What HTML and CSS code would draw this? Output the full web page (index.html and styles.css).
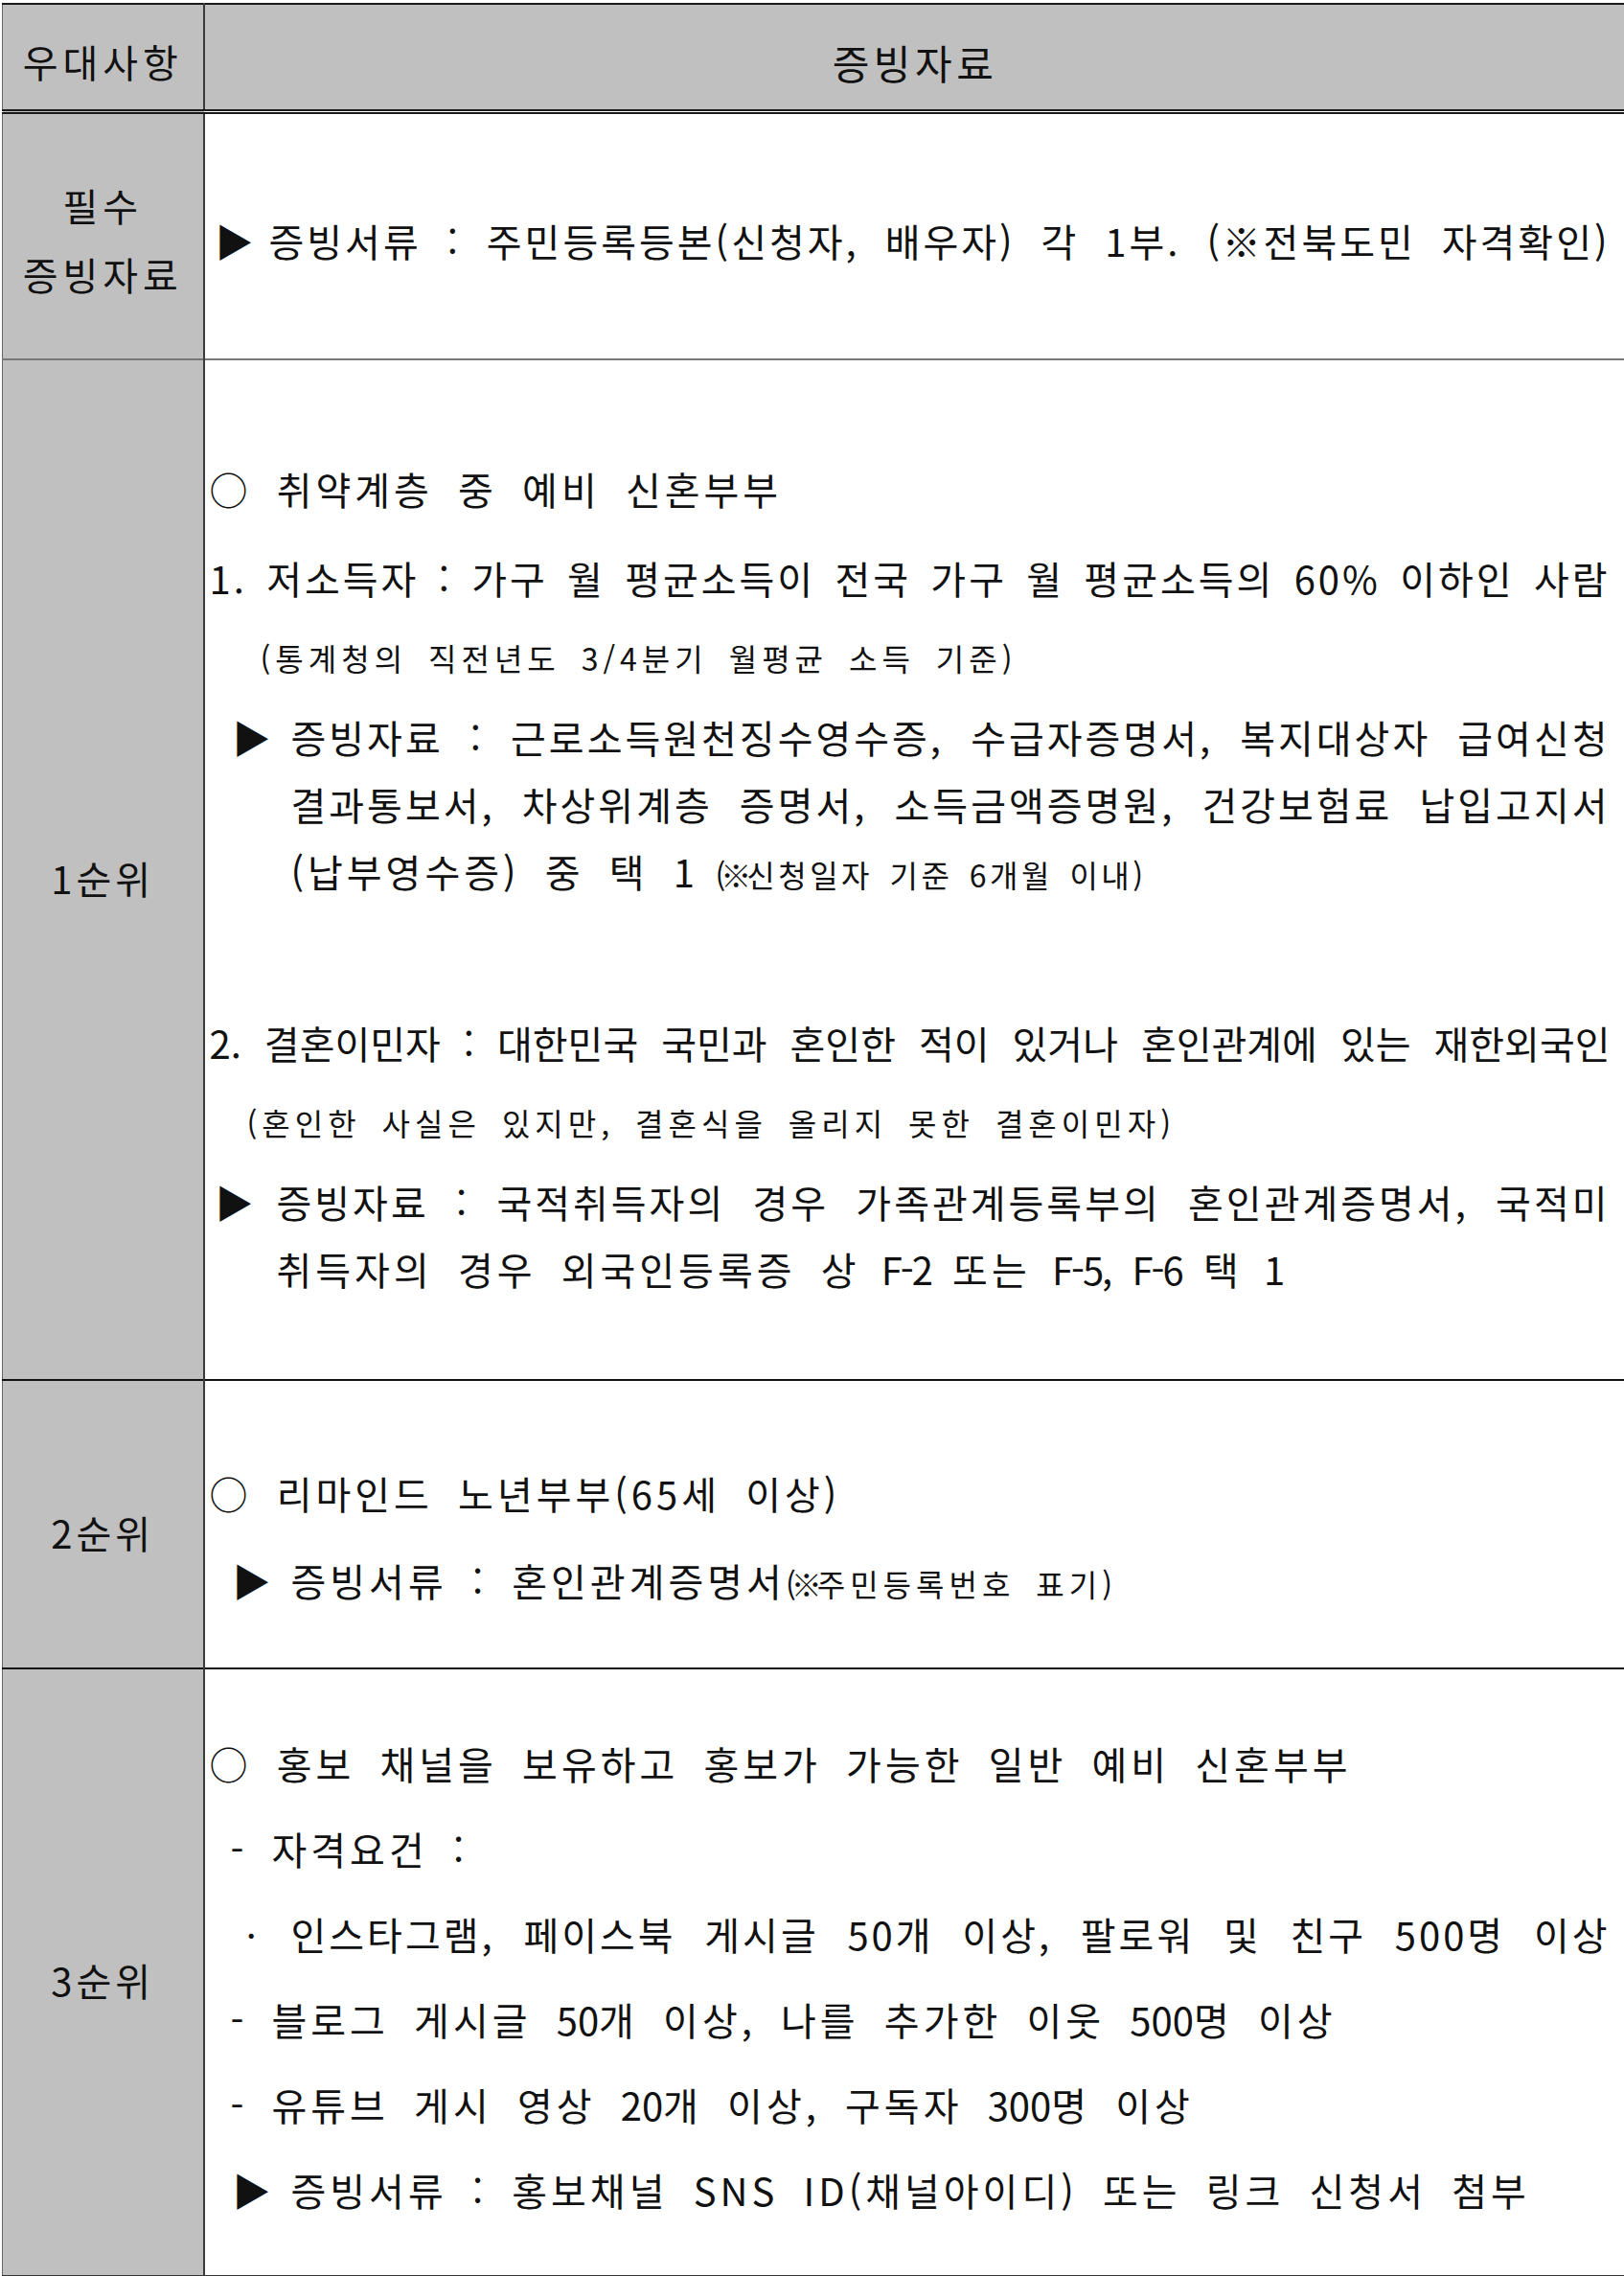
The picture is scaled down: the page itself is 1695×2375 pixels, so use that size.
FILE: index.html
```html
<!DOCTYPE html>
<html lang="ko">
<head>
<meta charset="utf-8">
<title>우대사항 증빙자료</title>
<link rel="stylesheet" href="styles.css">
</head>
<body>
<table class="sheet">
  <colgroup><col class="col-label"><col class="col-body"></colgroup>
  <thead>
    <tr class="row-head">
      <th class="head-label">우대사항</th>
      <th class="head-body">증빙자료</th>
    </tr>
  </thead>
  <tbody>
    <tr class="row-req">
      <th class="label label-req"><span class="label-line">필수</span><span class="label-line">증빙자료</span></th>
      <td class="body body-req">
        <div class="item">
          <span class="mark mark-tri-a">▶</span>
          <div class="text"><span class="line jl">증빙서류 : 주민등록등본(신청자, 배우자) 각 1부. <span class="kome">(※</span>전북도민 자격확인)</span></div>
        </div>
      </td>
    </tr>
    <tr class="row-p1">
      <th class="label label-p1">1순위</th>
      <td class="body body-p1">
        <div class="line">○ 취약계층 중 예비 신혼부부</div>
        <div class="line jl gap-a">1. 저소득자 : 가구 월 평균소득이 전국 가구 월 평균소득의 60% 이하인 사람</div>
        <div class="line small ind-s1 gap-b">(통계청의 직전년도 3/4분기 월평균 소득 기준)</div>
        <div class="item gap-b">
          <span class="mark mark-tri-b">▶</span>
          <div class="text">
            <span class="line jl">증빙자료 : 근로소득원천징수영수증, 수급자증명서, 복지대상자 급여신청</span>
            <span class="line jl">결과통보서, 차상위계층 증명서, 소득금액증명원, 건강보험료 납입고지서</span>
            <span class="line">(납부영수증) 중 택 1<span class="small small-b"> <span class="kome kome-s">(※</span>신청일자 기준 6개월 이내)</span></span>
          </div>
        </div>
        <div class="line jl jl-tight gap-c">2. 결혼이민자 : 대한민국 국민과 혼인한 적이 있거나 혼인관계에 있는 재한외국인</div>
        <div class="line small ind-s2 gap-b">(혼인한 사실은 있지만, 결혼식을 올리지 못한 결혼이민자)</div>
        <div class="item gap-b">
          <span class="mark mark-tri-c">▶</span>
          <div class="text">
            <span class="line jl">증빙자료 : 국적취득자의 경우 가족관계등록부의 혼인관계증명서, 국적미</span>
            <span class="line">취득자의 경우 외국인등록증 상<span class="lat-run"> <span class="lat">F-2</span> 또는 <span class="lat">F-5,</span> <span class="lat">F-6</span> 택 <span class="lat">1</span></span></span>
          </div>
        </div>
      </td>
    </tr>
    <tr class="row-p2">
      <th class="label label-p2">2순위</th>
      <td class="body body-p2">
        <div class="line">○ 리마인드 노년부부(65세 이상)</div>
        <div class="item gap-d">
          <span class="mark mark-tri-b">▶</span>
          <div class="text"><span class="line">증빙서류 : 혼인관계증명서<span class="small"><span class="kome kome-s">(※</span>주민등록번호 표기)</span></span></div>
        </div>
      </td>
    </tr>
    <tr class="row-p3">
      <th class="label label-p3">3순위</th>
      <td class="body body-p3">
        <div class="line tall">○ 홍보 채널을 보유하고 홍보가 가능한 일반 예비 신혼부부</div>
        <div class="item tall">
          <span class="mark mark-dash">-</span>
          <div class="text"><span class="line tall">자격요건 :</span></div>
        </div>
        <div class="item tall">
          <span class="mark mark-dot">ㆍ</span>
          <div class="text"><span class="line tall jl">인스타그램, 페이스북 게시글 50개 이상, 팔로워 및 친구 500명 이상</span></div>
        </div>
        <div class="item tall">
          <span class="mark mark-dash">-</span>
          <div class="text"><span class="line tall">블로그 게시글 <span class="num">50</span>개 이상, 나를 추가한 이웃 <span class="num">500</span>명 이상</span></div>
        </div>
        <div class="item tall">
          <span class="mark mark-dash">-</span>
          <div class="text"><span class="line tall">유튜브 게시 영상 <span class="num">20</span>개 이상, 구독자 <span class="num">300</span>명 이상</span></div>
        </div>
        <div class="item tall">
          <span class="mark mark-tri-b">▶</span>
          <div class="text"><span class="line tall">증빙서류 : 홍보채널 SNS ID(채널아이디) 또는 링크 신청서 첨부</span></div>
        </div>
      </td>
    </tr>
  </tbody>
</table>
</body>
</html>
```

FILE: styles.css
```css
html, body {
  margin: 0;
  padding: 0;
  background: #ffffff;
  overflow: hidden;
}

body {
  padding-top: 3px;
  padding-left: 2px;
  font-family: "Noto Sans CJK KR", "Noto Sans", sans-serif;
  color: #111111;
}

.sheet {
  border-collapse: collapse;
  table-layout: fixed;
  width: 1694px;
}

.col-label { width: 210px; }
.col-body { width: 1484px; }

.row-head {
  height: 112px;
  background: #c0c0c0;
  border-top: 2px solid #1a1a1a;
  border-bottom: 5px double #1a1a1a;
}

.head-label,
.head-body {
  margin: 0;
  font-weight: 400;
  text-align: center;
  vertical-align: middle;
  padding: 10px 0 0 0;
}

.head-label {
  font-size: 40px;
  letter-spacing: 5px;
  border-left: 1px solid #666666;
}

.head-body {
  font-size: 42px;
  letter-spacing: 4.5px;
  border-left: 2px solid #3a3a3a;
}

.label {
  margin: 0;
  padding: 0;
  background: #c0c0c0;
  font-weight: 400;
  font-size: 40px;
  letter-spacing: 4px;
  text-align: center;
  vertical-align: middle;
  border-left: 1px solid #666666;
}

.label-line {
  display: block;
  line-height: 72px;
}

.label-req { padding-top: 8px; letter-spacing: 5px; }
.label-p1 { padding-top: 16px; }
.label-p2 { padding-top: 16px; }
.label-p3 { padding-top: 16px; }

.body {
  margin: 0;
  border-left: 2px solid #3a3a3a;
  vertical-align: top;
  padding: 0 16px 0 5px;
  font-size: 40px;
  letter-spacing: 4px;
  word-spacing: 11px;
}

.row-req { height: 259px; border-bottom: 2px solid #777777; }
.row-p1 { height: 1065px; border-bottom: 2px solid #111111; }
.row-p2 { height: 301px; border-bottom: 2px solid #111111; }
.row-p3 { height: 634px; border-bottom: 2px solid #333333; }

.body-req { vertical-align: middle; padding-top: 10px; }
.body-p1 { padding-top: 99px; }
.body-p2 { padding-top: 82px; }
.body-p3 { padding-top: 54px; }

.line {
  display: block;
  line-height: 70px;
  height: 70px;
  white-space: nowrap;
}

.line.tall {
  line-height: 89px;
  height: 89px;
}

.jl {
  text-align: justify;
  text-align-last: justify;
  letter-spacing: 3px;
  word-spacing: -2px;
}

.jl-tight {
  letter-spacing: 0;
}

.small {
  font-size: 32px;
  letter-spacing: 5px;
  word-spacing: 8px;
}

.small-b {
  letter-spacing: 3.5px;
  word-spacing: 5px;
}

.kome {
  letter-spacing: -12px;
}

.kome-s {
  letter-spacing: -5px;
}

.num { letter-spacing: 0; }

.lat-run { word-spacing: 7px; }
.lat { letter-spacing: -2px; }

.item {
  display: flex;
  align-items: flex-start;
}

.text {
  flex: 1;
  min-width: 0;
}

.mark {
  display: block;
  line-height: 70px;
  letter-spacing: 0;
  box-sizing: border-box;
}

.item.tall .mark { line-height: 89px; }

.mark-tri-a { width: 62px; padding-left: 6px; }
.mark-tri-b { width: 85px; padding-left: 24px; }
.mark-tri-c { width: 70px; padding-left: 6px; }
.mark-dash { width: 65px; padding-left: 22px; }
.mark-dot { width: 85px; padding-left: 25px; }

.ind-s1 { padding-left: 53px; }
.ind-s2 { padding-left: 39px; }

.gap-a { margin-top: 23px; }
.gap-b { margin-top: 13px; }
.gap-c { margin-top: 109px; }
.gap-d { margin-top: 21px; }
```
